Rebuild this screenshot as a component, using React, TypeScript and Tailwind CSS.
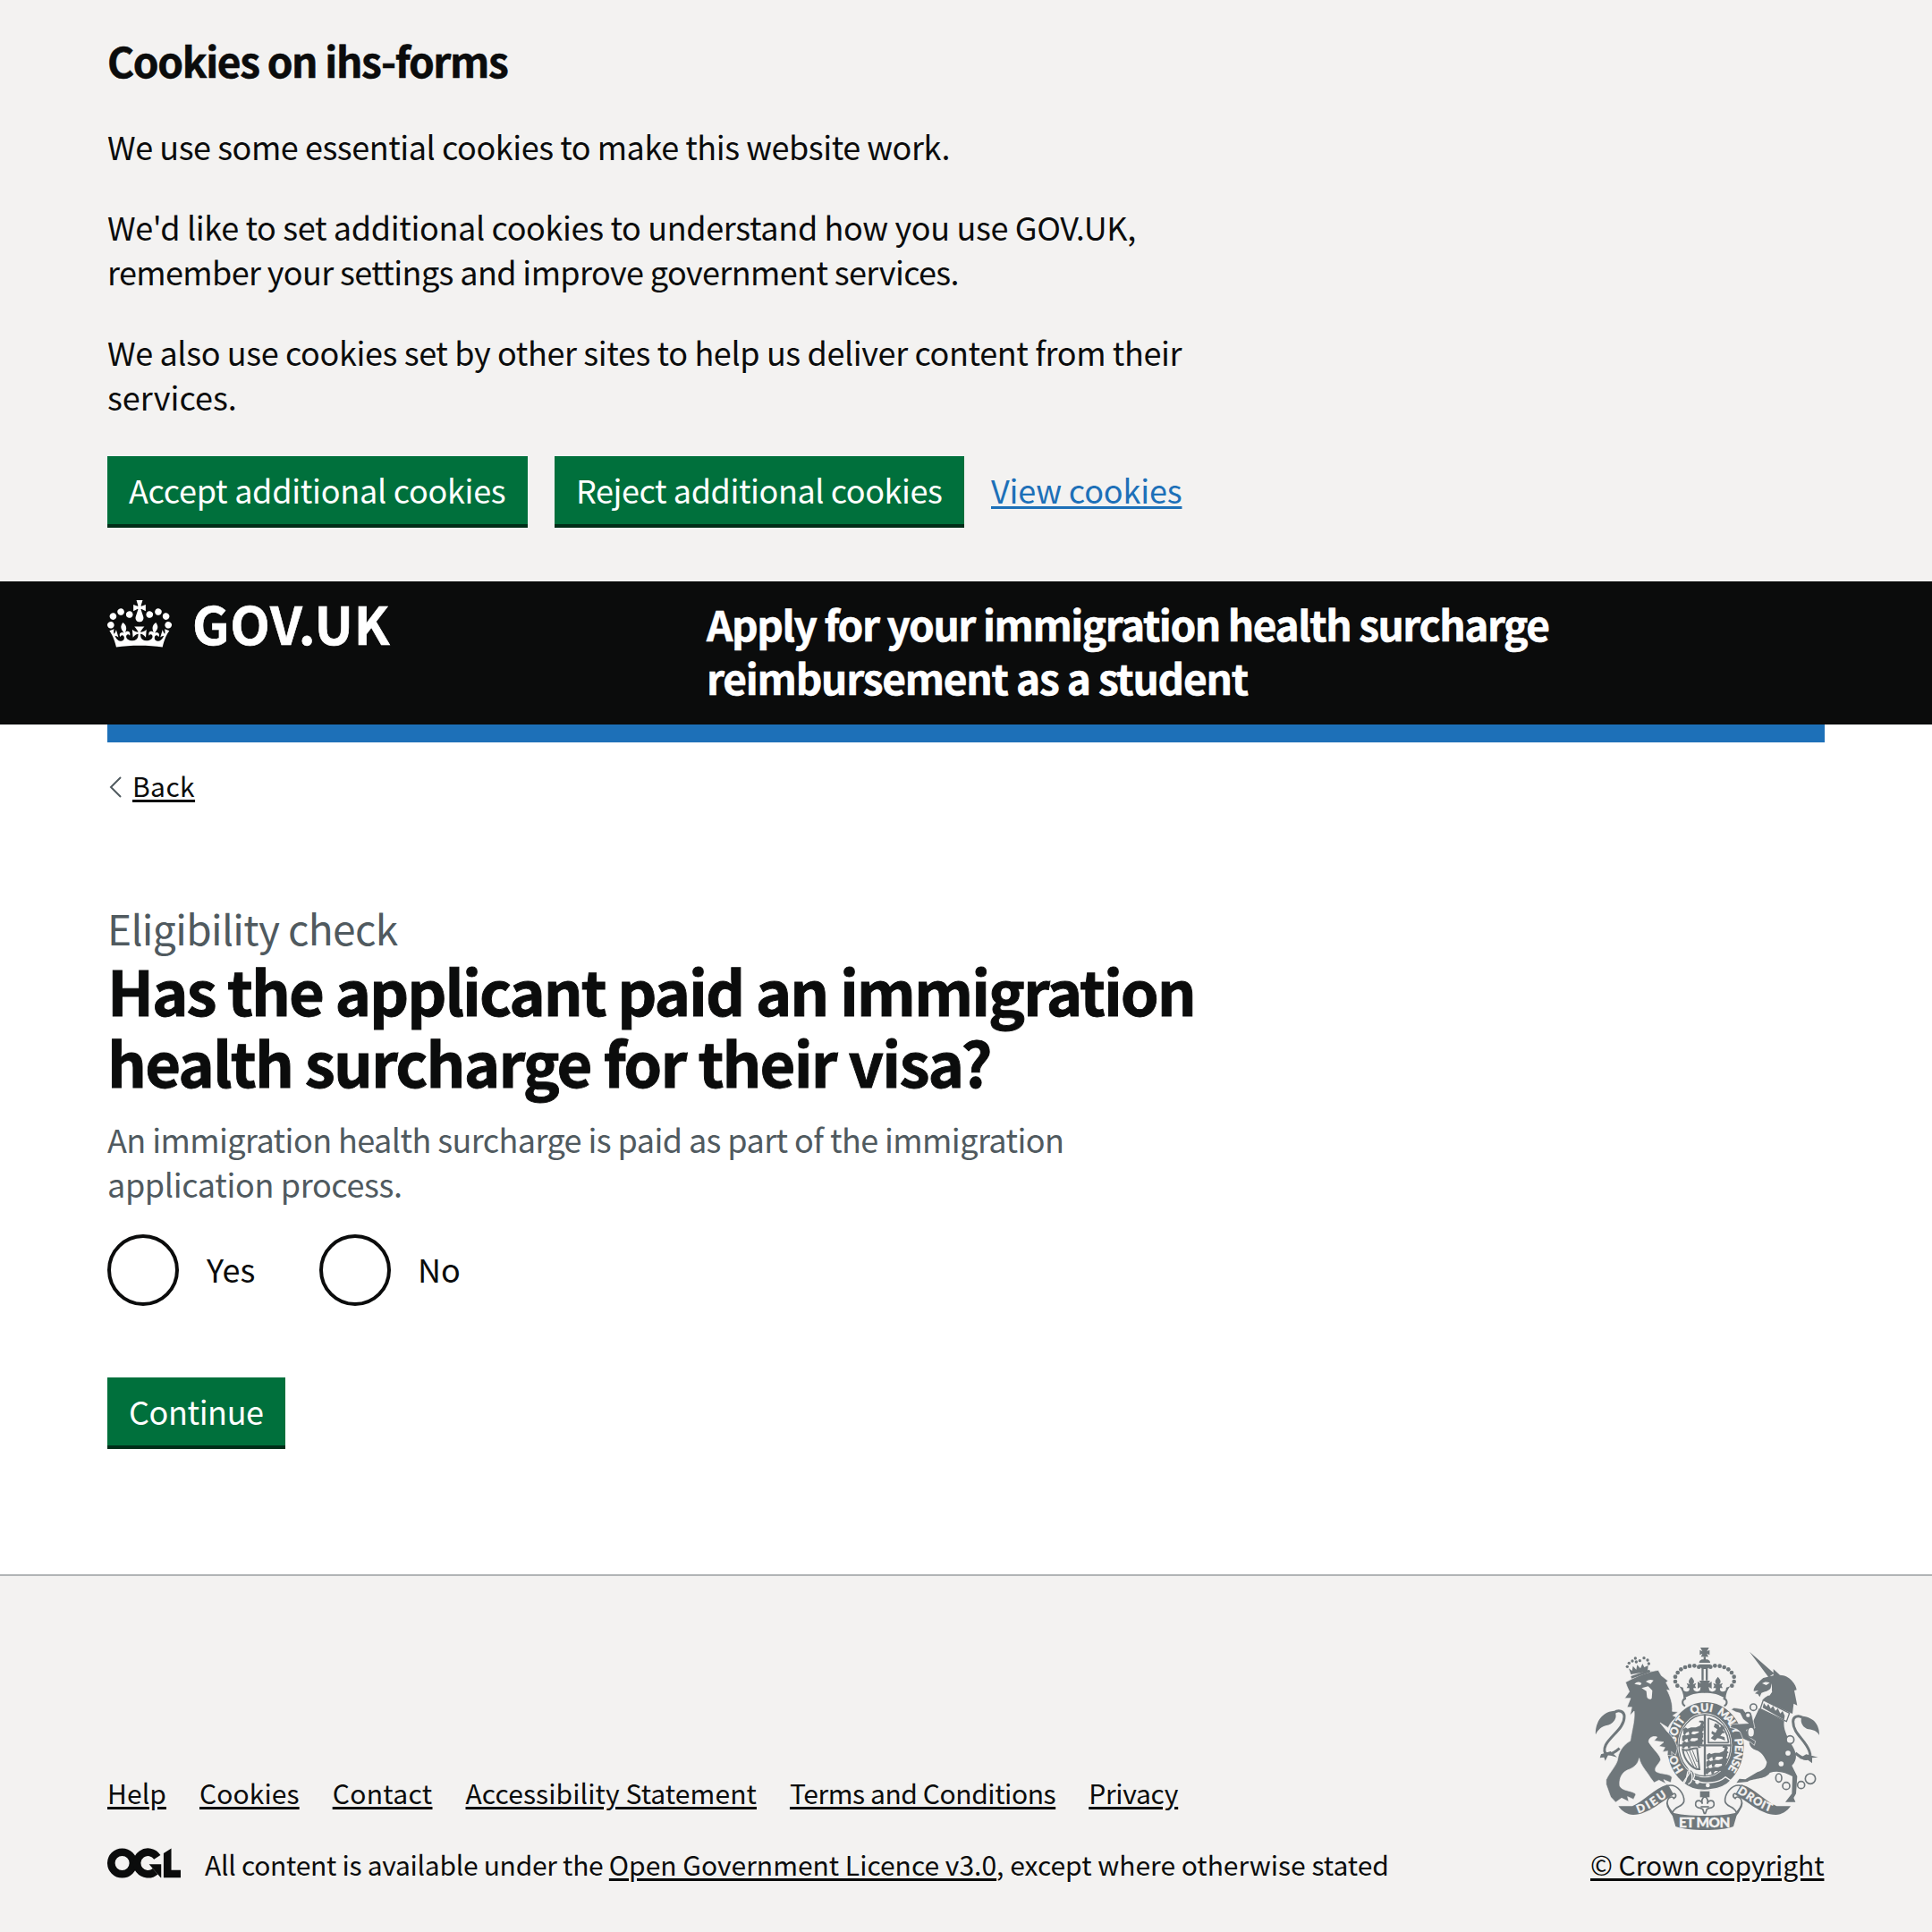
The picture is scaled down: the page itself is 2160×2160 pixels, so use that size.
const CROWN =
  'M25 30.2c3.5 1.5 7.7-.2 9.1-3.7 1.5-3.6-.2-7.8-3.9-9.2-3.6-1.4-7.6.3-9.1 3.9-1.4 3.5.3 7.5 3.9 9zM9 39.5c3.6 1.5 7.8-.2 9.2-3.7 1.5-3.6-.2-7.8-3.9-9.1-3.6-1.5-7.6.2-9.1 3.8-1.4 3.5.3 7.5 3.8 9zM4.4 57.2c3.5 1.5 7.7-.2 9.1-3.8 1.5-3.6-.2-7.7-3.9-9.1-3.5-1.5-7.6.3-9.1 3.8-1.4 3.5.3 7.6 3.9 9.1zm38.3-21.4c3.5 1.5 7.7-.2 9.1-3.8 1.5-3.6-.2-7.7-3.9-9.1-3.6-1.5-7.6.3-9.1 3.8-1.3 3.6.4 7.7 3.9 9.1zm64.4-5.6c-3.6 1.5-7.8-.2-9.1-3.7-1.5-3.6.2-7.8 3.8-9.2 3.6-1.4 7.7.3 9.2 3.9 1.3 3.5-.4 7.5-3.9 9zm15.9 9.3c-3.6 1.5-7.7-.2-9.1-3.7-1.5-3.6.2-7.8 3.7-9.1 3.6-1.5 7.7.2 9.2 3.8 1.5 3.5-.3 7.5-3.8 9zm4.7 17.7c-3.6 1.5-7.8-.2-9.2-3.8-1.5-3.6.2-7.7 3.9-9.1 3.6-1.5 7.7.3 9.2 3.8 1.3 3.5-.4 7.6-3.9 9.1zM89.3 35.8c-3.6 1.5-7.8-.2-9.2-3.8-1.4-3.6.2-7.7 3.9-9.1 3.6-1.5 7.7.3 9.2 3.8 1.4 3.6-.3 7.7-3.9 9.1zM69.7 17.7l8.9 4.7V9.3l-8.9 2.8c-.2-.3-.5-.6-.9-.9L72.4 0H59.6l3.5 11.2c-.3.3-.6.5-.9.9l-8.8-2.8v13.1l8.8-4.7c.3.3.6.7.9.9l-5 15.4v.1c-.2.8-.4 1.6-.4 2.4 0 4.1 3.1 7.5 7 8.1h.2c.3 0 .7.1 1 .1.4 0 .7 0 1-.1h.2c4-.6 7.1-4.1 7.1-8.1 0-.8-.1-1.7-.4-2.4V34l-5.1-15.4c.4-.2.7-.6 1-.9zM66 92.8c16.9 0 32.8 1.1 47.1 3.2 4-16.9 8.9-26.7 14-33.5l-9.6-3.4c1 4.9 1.1 7.2 0 10.2-1.5-1.4-3-4.3-4.2-8.7L108.6 76c2.8-2 5-3.2 7.5-3.3-4.4 9.4-10 11.9-13.6 11.2-4.3-.8-6.3-4.6-5.6-7.9 1-4.7 5.7-5.9 8-.5 4.3-8.7-3-11.4-7.6-8.8 7.1-7.2 7.9-13.5 2.1-21.1-8 6.1-8.1 12.3-4.5 20.8-4.7-5.4-12.1-2.5-9.5 6.2 3.4-5.2 7.9-2 7.2 3.1-.6 4.3-6.4 7.8-13.5 7.2-10.3-.9-10.9-8-11.2-13.8 2.5-.5 7.1 1.8 11 7.3L80.2 60c-4.1 4.4-8 5.3-12.3 5.4 1.4-4.4 8-11.6 8-11.6H55.5s6.4 7.2 7.9 11.6c-4.2-.1-8-1-12.3-5.4l1.4 16.4c3.9-5.5 8.5-7.7 10.9-7.3-.3 5.8-.9 12.8-11.1 13.8-7.2.6-12.9-2.9-13.5-7.2-.7-5 3.8-8.3 7.1-3.1 2.7-8.7-4.6-11.6-9.4-6.2 3.7-8.5 3.6-14.7-4.6-20.8-5.8 7.6-5 13.9 2.2 21.1-4.7-2.6-11.9.1-7.7 8.8 2.3-5.5 7.1-4.2 8.1.5.7 3.3-1.3 7.1-5.7 7.9-3.5.7-9-1.8-13.5-11.2 2.5.1 4.7 1.3 7.5 3.3l-4.7-15.4c-1.2 4.4-2.7 7.2-4.3 8.7-1.1-3-.9-5.3 0-10.2l-9.5 3.4c5 6.9 9.9 16.7 14 33.5 14.8-2.1 30.8-3.2 47.7-3.2z';

const LION = 'M-34 10l8-6 6 4 12-4 16 0 14-6 4-10-8-2 2-5 12 0 5 6-4 10 6 6-5 4 0 8-8 2-2 6 8 3-12 1-2-10-20 0-6 7 6 3-12 1-2-10-8 4-4 6-6-2z';

function CrownHalf() {
  return (
    <g>
      {[[388, 101], [373, 97], [357, 98], [342, 102], [328, 109], [317, 120], [309, 134], [309, 150], [316, 164]].map(([x, y]) => (
        <circle key={x + y * 1000} cx={x} cy={y} r="7" />
      ))}
      <path d="M408 188C380 188 358 192 337 208C337 190 330 176 322 166L335 170L337 180C346 187 359 184 356 172L347 172L351 164L347 155L359 160C352 152 352 146 363 134C374 146 374 152 367 160L379 155L375 164L379 172L370 172C368 184 384 187 392 179L394 168L384 174V150L395 157L389 147H408Z" />
      <path d="M345 206C330 210 330 226 342 232" className="fill-none stroke-[#6f777b] stroke-[6]" />
    </g>
  );
}

function ScrollHalf() {
  return (
    <g>
      <path d="M118 568H165C205 552 238 508 282 496L302 530C262 552 220 595 168 597C148 597 130 585 118 568Z" />
      <path d="M284 499C318 492 340 530 338 552C334 572 306 566 300 590C284 576 278 560 284 546C288 536 300 534 304 542C316 536 310 520 300 528Z" className="fill-[#f3f2f1] stroke-[#6f777b] stroke-[5]" />
      <path d="M283 550C284 566 294 580 302 590L300 600C290 590 280 572 283 550Z" />
    </g>
  );
}

function RoyalArms() {
  return (
    <svg viewBox="24 36 786 612" className="block h-[204px] w-[262px] fill-[#6f777b] stroke-none" aria-label="Royal coat of arms">
      {/* crest crown */}
      <path d="M393 36h29l-7 13 9-5v17l-9-5 5 11h-25l5-11-9 5V44l9 5z" />
      <path d="M404 67h7v9h6c6 3 9 6 9 11h-37c0-5 3-8 9-11h6z" />
      <path d="M388 92h40l-5 10-5 4v40h-7v-38h-7v38h-7v-40l-4-4z" />
      <CrownHalf />
      <g transform="translate(815) scale(-1 1)">
        <CrownHalf />
      </g>

      {/* garter */}
      <ellipse cx="410" cy="367" rx="129" ry="148" />
      <ellipse cx="408" cy="364" rx="91" ry="108" className="fill-[#f3f2f1]" />
      <ellipse cx="408" cy="364" rx="87" ry="103" className="fill-none stroke-[#6f777b] stroke-[4]" />
      <path d="M408 260v204M320 364h176" className="stroke-[#6f777b] stroke-[7]" />
      <g>
        <path d={LION} transform="translate(370 300)" />
        <path d={LION} transform="translate(366 323)" />
        <path d={LION} transform="translate(366 346)" />
        <path d={LION} transform="translate(449 385)" />
        <path d={LION} transform="translate(447 409)" />
        <path d={LION} transform="translate(445 433)" />
      </g>
      <path d="M420 273v82h68M420 273l26 10c24 14 38 40 42 72" className="fill-none stroke-[#6f777b] stroke-[5]" />
      <path d="M428 340l10-10-8-6 2-8 12 6 6-12-12-8 4-12 12 4 4 10 10-8 8 10-8 6 8 10-10 2-6 8 14 4 2 12-14-6-12-2-8 8z" />
      <path d="M334 378c16 8 30-6 48-4l8 70c-22 2-52-30-56-66z" className="fill-none stroke-[#6f777b] stroke-[6]" />
      <path d="M346 382l26 56M356 380l24 58M366 380l16 40" className="stroke-[#6f777b] stroke-[3]" />

      <defs>
        <path id="garter-line" d="M410 484A99 116 0 0 1 410 250A99 116 0 0 1 410 484" />
      </defs>
      <g className="fill-[#f3f2f1] stroke-[#f3f2f1] stroke-1 font-['Lato'] text-[37px] font-black">
        <text><textPath href="#garter-line" startOffset="84">HO</textPath></text>
        <text><textPath href="#garter-line" startOffset="182" textLength="84">SOIT</textPath></text>
        <text><textPath href="#garter-line" startOffset="294" textLength="70">QUI</textPath></text>
        <text><textPath href="#garter-line" startOffset="380" textLength="68">MAL</textPath></text>
        <text><textPath href="#garter-line" startOffset="448">Y</textPath></text>
        <text><textPath href="#garter-line" startOffset="486" textLength="108">PENSE</textPath></text>
      </g>
      <path d="M335 490c10-20 30-34 20-48 20 8 22 24 14 36 30 18 84 14 108-8l18 12c-30 36-120 46-160 8z" className="stroke-[#f3f2f1] stroke-[4]" />
      <path d="M338 490c12-8 8-28 14-40M352 494c16-6 16-26 10-42" className="fill-none stroke-[#f3f2f1] stroke-[4]" />
      <circle cx="383" cy="487" r="7" className="fill-[#f3f2f1]" />
      <circle cx="418" cy="498" r="7" className="fill-[#f3f2f1]" />

      {/* lion supporter */}
      <g className="stroke-[#f3f2f1] stroke-[2]">
        <path d="M142 152l20-10c32-16 62-26 90-30l10 18 23 18-7 5 14 27-11-2c12 22 20 48 18 72l20 2-18 12 12 6c-12 10-22 20-28 35l-27-17 24 30c18 17 31 37 34 57l-6 22-14-12 2 14-16-2 2-14-18 3 8-15-20-4 16-14-32-4 10-13c-15-5-29 3-28 17 13 23 40 43 40 60-7 16-22 23-17 38 17 12 45 5 55 20l-4 18-24-10 8 14-24-12-16 8-12-16c-13-22-34-42-38-66-4 22-22 34-40 40-22 10-28 35-25 54 10 18 42 13 54 27l-8 17-20-9 4 17-24-12-20 14-17-18-15-42v-16c12-25 37-50 39-70 3-20 14-44 42-60 6-40 16-70 13-100l-14 15 6-28-16 0 12-30-20 0 16-22-8-18z" />
      </g>
      <path d="M172 158c8-8 16-8 24-2l-4 6zM210 150c8-6 16-8 26-4l-10 12zM196 172l22-6 14 14-2 26c-4 6-14 4-16-4l-2-20z" className="fill-[#f3f2f1]" />
      <path d="M160 132l62-22 4 8-64 22z" />
      <path d="M160 126l-7-20 11 8 3-16 11 12 3-16 11 12 7-16 6 12 13-6-2 20z" />
      {[[148, 100], [154, 88], [165, 81], [178, 84], [175, 72], [190, 80], [204, 71], [216, 78], [220, 90]].map(([x, y]) => (
        <circle key={`${x}-${y}`} cx={x} cy={y} r="5" />
      ))}
      <path d="M122 374c-34 30-62 24-46-12 18-32 62-56 62-94 0-20-20-24-34-14" className="fill-none stroke-[#6f777b] stroke-[9]" />
      <path d="M42 328c-2-32 14-76 62-80 16 22-4 44-22 48-18 2-34 16-40 32zM60 394l32-10 22 20-30-8-10 20-4-12-14 2z" />

      {/* unicorn supporter */}
      <path d="M558 50l82 72-18 14zM572 182c-2-14 18-32 32-44l34-8 0-22 22 20c32 0 56 34 56 50l-8 2 10 50-12-6-4 34-100-46c8-12 26-16 32-28l-4-12c-10 12-22 12-32 16l-6 14-6-10-10-2 12-10z" />
      <path d="M600 156c8-6 16-6 26-2l-12 8zM630 156c6 16 4 32-6 42l-5-4c9-10 12-24 11-38z" className="fill-[#f3f2f1]" />
      <path d="M604 212l88 44-10 28-88-42z" className="fill-[#f3f2f1] stroke-[#6f777b] stroke-[4]" />
      <path d="M602 238l4-16 9 12 6-9 8 16 8-9 8 16 8-8 8 17 8-8 7 16-2 13z" />
      <path d="M590 240l84 42c-4 26 10 52 22 74 20 32 26 52 4 76l18 36-4 58-8 14 6 14-34 0 22-28 2-58c-22-12-50-22-76-12-14 24-62 18-74 30l-38 4 10-14 20 2 40-24c26-8 30-20 32-34-10-22-18-34-36-40-26-6-28-34-16-52 6-12-2-30 4-40z" />
      <g className="stroke-[#f3f2f1] stroke-[2]">
        <path d="M566 262l-18-4-12-16-30-4-10 6 16 8 14 4 10 20 18 14-34 2-20 0-8 12 24 6 10 8 10 24 26 12 12 10 4-14-22-14-8-24 28-6z" />
      </g>
      <g className="fill-[#f3f2f1] stroke-[#6f777b] stroke-[5]">
        <circle cx="571" cy="236" r="11" />
        <circle cx="553" cy="263" r="9" />
        <ellipse cx="563" cy="320" rx="12" ry="17" />
        <circle cx="694" cy="345" r="13" />
        <circle cx="687" cy="390" r="11" />
        <circle cx="664" cy="426" r="11" />
        <ellipse cx="656" cy="473" rx="10" ry="14" />
        <circle cx="681" cy="500" r="12" />
        <circle cx="731" cy="497" r="12" />
        <circle cx="762" cy="476" r="17" />
      </g>
      <path d="M712 390c40 34 56 18 46-8-14-38-54-58-54-98 0-18 18-22 30-14" className="fill-none stroke-[#6f777b] stroke-[9]" />
      <path d="M792 330c0-32-14-60-58-64-10 22 6 40 22 44 16 2 28 6 36 20zM724 408l24-14 40 10-20 2 0 18-16-12z" />

      {/* motto scroll */}
      <ScrollHalf />
      <g transform="translate(814) scale(-1 1)">
        <ScrollHalf />
      </g>
      <path d="M296 588c40 16 180 16 222 0l-14 48c-40 16-150 16-194 0z" />
      <defs>
        <path id="motto-left" d="M184 592C226 580 256 552 296 526" />
        <path id="motto-right" d="M516 523C554 544 588 578 640 590" />
      </defs>
      <g className="fill-[#f3f2f1] stroke-[#f3f2f1] stroke-1 font-['Lato'] text-[38px] font-black">
        <text><textPath href="#motto-left" textLength="114">DIEU</textPath></text>
        <text><textPath href="#motto-right" textLength="130">DROIT</textPath></text>
        <text x="407" y="639" textAnchor="middle" textLength="172" className="text-[46px]">ET MON</text>
      </g>
      <path d="M392 518h32v20h-32z" />
      <path d="M408 534c10 8 12 16 8 26 4-14 22-14 23 0 1 8-6 14-14 14l-10 4-5 14h-4l-5-14-10-4c-8 0-15-6-14-14 1-14 19-14 23 0-4-10-2-18 8-26z" className="fill-[#f3f2f1] stroke-[#6f777b] stroke-[5]" />
      <path d="M394 570h28" className="stroke-[#6f777b] stroke-[5]" />
    </svg>
  );
}

function OglLogo() {
  return (
    <svg viewBox="0 0 483.2 195.7" className="mt-0.5 mr-[27px] h-[34px] w-[82px] shrink-0 fill-none stroke-[#0b0c0c] stroke-[50.7]" aria-label="OGL">
      <circle cx="97.8" cy="97.8" r="72.5" />
      <path d="M329 59A72.5 72.5 0 1 0 316 152" />
      <path d="M274.9 105.7h80v87.8h-3zM370.8 32.4 421.5.1v142.7h61.7v50.7H370.8z" className="fill-[#0b0c0c] stroke-none" />
    </svg>
  );
}

const footerLinks = [
  { text: 'Help', track: 'tracking-[0.1px]' },
  { text: 'Cookies', track: 'tracking-[0.1px]' },
  { text: 'Contact', track: 'tracking-[0.35px]' },
  { text: 'Accessibility Statement', track: 'tracking-[0.1px]' },
  { text: 'Terms and Conditions', track: 'tracking-[-0.42px]' },
  { text: 'Privacy', track: 'tracking-[-0.27px]' },
];

const button = 'h-20 border-b-4 border-[#002d18] bg-[#00703c] px-6 pb-[2px] text-left text-white whitespace-nowrap';
const link = 'underline decoration-[3px] underline-offset-[3px]';

export default function App() {
  return (
    <div className="flex h-[2160px] w-[2160px] flex-col overflow-hidden bg-white font-['Noto_Sans_CJK_JP','Noto_Sans',sans-serif] text-[36px] leading-[50px] text-[#0b0c0c]">
      <section className="h-[650px] bg-[#f3f2f1] px-[120px] pt-[37px] whitespace-nowrap">
        <h2 className="text-[46px] leading-[60px] font-bold tracking-[-1.35px] [-webkit-text-stroke:0.6px]">Cookies on ihs-forms</h2>
        <p className="mt-[41px] tracking-[-0.45px]">We use some essential cookies to make this website work.</p>
        <p className="mt-10">
          <span className="block tracking-[-0.36px]">We'd like to set additional cookies to understand how you use GOV.UK,</span>
          <span className="block tracking-[-0.62px]">remember your settings and improve government services.</span>
        </p>
        <p className="mt-10">
          <span className="block tracking-[-0.38px]">We also use cookies set by other sites to help us deliver content from their</span>
          <span className="block">services.</span>
        </p>
        <div className="mt-[42px] flex gap-[30px]">
          <button className={`${button} w-[470px] tracking-[-0.28px]`}>Accept additional cookies</button>
          <button className={`${button} w-[458px] tracking-[-0.43px]`}>Reject additional cookies</button>
          <a className={`${link} mt-3 tracking-[-0.16px] text-[#1d70b8]`}>View cookies</a>
        </div>
      </section>

      <header className="flex h-40 bg-[#0b0c0c] px-[120px] text-white">
        <div className="flex w-[670px] items-start">
          <svg viewBox="0 0 132 97" className="mt-[21px] h-[53px] w-[72px] fill-white" aria-hidden="true">
            <path d={CROWN} />
          </svg>
          <span className="mt-[16px] ml-[23px] text-[58px] leading-[60px] font-bold tracking-[0.7px] [-webkit-text-stroke:0.6px]">GOV.UK</span>
        </div>
        <div className="pt-[17px] text-[46px] leading-[60px] font-bold whitespace-nowrap [-webkit-text-stroke:0.6px]">
          <span className="block tracking-[-1.44px]">Apply for your immigration health surcharge</span>
          <span className="block tracking-[-1.22px]">reimbursement as a student</span>
        </div>
      </header>
      <div className="mx-[120px] h-5 bg-[#1d70b8]" />

      <main className="flex h-[930px] flex-col items-start px-[120px] whitespace-nowrap">
        <a className="mt-7 flex h-10 items-center text-[30px] leading-10">
          <svg viewBox="0 0 28 40" className="h-10 w-7 fill-none stroke-[#505a5f] stroke-2" aria-hidden="true">
            <path d="M15 11 4 22 15 33" />
          </svg>
          <span className={`${link} tracking-[0.4px]`}>Back</span>
        </a>
        <span className="mt-[109px] text-[46px] leading-[60px] tracking-[-0.65px] text-[#505a5f]">Eligibility check</span>
        <h1 className="-mt-px text-[68.7px] leading-[80px] font-bold [-webkit-text-stroke:0.9px]">
          <span className="block tracking-[-2.02px]">Has the applicant paid an immigration</span>
          <span className="block tracking-[-1.83px]">health surcharge for their visa?</span>
        </h1>
        <p className="mt-[22px] text-[#505a5f]">
          <span className="block tracking-[-0.58px]">An immigration health surcharge is paid as part of the immigration</span>
          <span className="block tracking-[-0.36px]">application process.</span>
        </p>
        <div className="mt-8 flex h-20 items-start">
          <span className="size-20 rounded-full border-4 border-[#0b0c0c]" />
          <span className="mt-[13px] ml-[31px] w-[126px]">Yes</span>
          <span className="size-20 rounded-full border-4 border-[#0b0c0c]" />
          <span className="mt-[13px] ml-[30px]">No</span>
        </div>
        <button className={`${button} mt-20 w-[199px] tracking-[-0.42px]`}>Continue</button>
      </main>

      <footer className="flex h-[400px] items-end justify-between border-t-2 border-[#b1b4b6] bg-[#f3f2f1] px-[120px] pb-14 text-[30px] leading-10 whitespace-nowrap">
        <div>
          <div className="flex gap-[37px]">
            {footerLinks.map(({ text, track }) => (
              <a key={text} className={`${link} ${track}`}>{text}</a>
            ))}
          </div>
          <div className="mt-10 flex items-start">
            <OglLogo />
            <p>
              <span className="tracking-[-0.28px]">All content is available under the </span>
              <a className={link}>Open Government Licence v3.0</a>, except where otherwise stated
            </p>
          </div>
        </div>
        <div className="flex w-[262px] flex-col gap-[18px]">
          <RoyalArms />
          <a className={`${link} tracking-[-0.06px]`}>© Crown copyright</a>
        </div>
      </footer>
    </div>
  );
}
